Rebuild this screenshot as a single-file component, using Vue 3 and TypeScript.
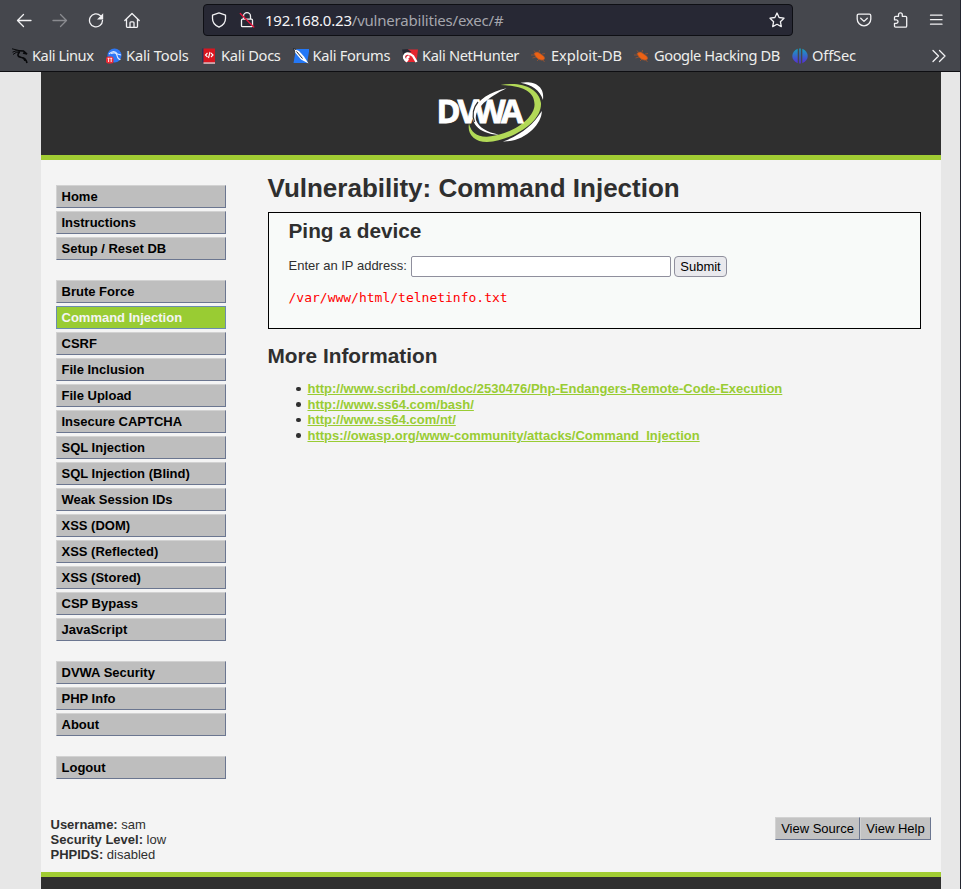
<script setup lang="ts">
interface Bookmark {
  label: string
  icon: 'dragon' | 'tools' | 'docs' | 'forums' | 'nethunter' | 'bug' | 'offsec'
  /** letter spacing in px */
  tracking: number
}

const bookmarks: Bookmark[] = [
  { label: 'Kali Linux', icon: 'dragon', tracking: -0.45 },
  { label: 'Kali Tools', icon: 'tools', tracking: -0.17 },
  { label: 'Kali Docs', icon: 'docs', tracking: -0.3 },
  { label: 'Kali Forums', icon: 'forums', tracking: -0.3 },
  { label: 'Kali NetHunter', icon: 'nethunter', tracking: -0.35 },
  { label: 'Exploit-DB', icon: 'bug', tracking: -0.05 },
  { label: 'Google Hacking DB', icon: 'bug', tracking: -0.43 },
  { label: 'OffSec', icon: 'offsec', tracking: -0.15 },
]

const menu: string[][] = [
  ['Home', 'Instructions', 'Setup / Reset DB'],
  [
    'Brute Force', 'Command Injection', 'CSRF', 'File Inclusion', 'File Upload',
    'Insecure CAPTCHA', 'SQL Injection', 'SQL Injection (Blind)', 'Weak Session IDs',
    'XSS (DOM)', 'XSS (Reflected)', 'XSS (Stored)', 'CSP Bypass', 'JavaScript',
  ],
  ['DVWA Security', 'PHP Info', 'About'],
  ['Logout'],
]
const current = 'Command Injection'

const links: string[] = [
  'http://www.scribd.com/doc/2530476/Php-Endangers-Remote-Code-Execution',
  'http://www.ss64.com/bash/',
  'http://www.ss64.com/nt/',
  'https://owasp.org/www-community/attacks/Command_Injection',
]
</script>

<template>
  <div class="window">
    <header class="chrome">
      <div class="toolbar">
        <span class="tool">
          <svg viewBox="0 0 16 16"><path d="M15 8.500H1.500M7.500 2.500l-6 6 6 6" /></svg>
        </span>
        <span class="tool dim">
          <svg viewBox="0 0 16 16"><path d="M1 8.500h13.500M8.500 2.500l6 6-6 6" /></svg>
        </span>
        <span class="tool">
          <svg viewBox="0 0 16 16"><path d="M12.500 3.700A6.500 6.500 0 1 0 14.500 8.500" /><path class="solid" d="M15.200 1.200v6.300H9z" /></svg>
        </span>
        <span class="tool">
          <svg viewBox="0 0 16 16"><path d="M.8 8.500L8 1.500l7.200 7M2.500 7.300v7.300q0 .7.700.7h9.600q.7 0 .7-.7V7.300M6 15.300v-4.500q0-1 1-1h2q1 0 1 1v4.500" /></svg>
        </span>
        <div class="address">
          <svg class="shield" viewBox="0 0 16 16"><path d="M8 .8l6.500 2.300v3.400c0 4-2.500 7-6.500 8.700-4-1.700-6.500-4.700-6.500-8.700V3.100z" /></svg>
          <svg class="lock" viewBox="0 0 16 16"><path d="M4.500 7V4.200a3.500 3.500 0 0 1 7 0V7M3.500 7.200h9q1 0 1 1v5.500q0 1-1 1h-9q-1 0-1-1V8.200q0-1 1-1z" /><path class="slash" d="M1.300 1.500l13.500 13.500" /></svg>
          <span class="url"><b>192.168.0.23</b>/vulnerabilities/exec/#</span>
          <svg class="star" viewBox="0 0 16 16"><path d="M8 1l2.100 4.500 4.900.7-3.600 3.500.9 4.900L8 12.300l-4.300 2.300.9-4.900L1 6.200l4.900-.7z" /></svg>
        </div>
        <div class="actions">
          <span class="tool">
            <svg viewBox="0 0 16 16"><path d="M2.700 2.200h10.600q1.500 0 1.500 1.500V7a6.800 6.800 0 0 1-13.600 0V3.700q0-1.500 1.500-1.500zM4.700 6.300L8 9.400l3.300-3.100" /></svg>
          </span>
          <span class="tool">
            <svg viewBox="0 0 16 16"><path d="M6.500 4.300V2.700a1.900 1.900 0 0 1 3.800 0v1.600h3.200q1.200 0 1.200 1.200v8.500q0 1.200-1.200 1.200H3.700q-1.200 0-1.200-1.200v-2.700h1.800a1.700 1.700 0 0 0 0-3.400H2.500V5.500q0-1.200 1.200-1.200z" /></svg>
          </span>
          <span class="tool">
            <svg viewBox="0 0 16 16"><path d="M2.500 3.200h11.500M2.500 7.700h11.500M2.500 12.200h11.500" /></svg>
          </span>
        </div>
      </div>
      <nav class="bookmarks">
        <span v-for="b in bookmarks" :key="b.label" class="bookmark">
          <svg viewBox="0 0 16 16">
            <g v-if="b.icon === 'dragon'" class="dragon">
              <path d="M0 .8l7 1.700M.5 4.200Q4 2 8 3M1 6.500Q4 3.500 8 4" />
              <path d="M6.500 2.800l5 .2 3.500 3-4-1M7.500 4Q3.500 8.500 9.500 9.500q4.500.5 5.500 5.500M10.500 9.800q2 .7 2.500 3" class="body" />
            </g>
            <g v-else-if="b.icon === 'tools'">
              <circle cx="8.500" cy="7.500" r="7" fill="#2d78f6" />
              <path d="M3 6q5-5 8.500 0l3.500 1M5 5.500q5-2 6 2t3.500 4" fill="none" stroke="#d8e7ff" stroke-width="1.100" />
              <rect x="0" y="8.500" width="7.500" height="7" rx="2.500" fill="#ed2b35" />
              <path d="M1.600 10.300h2M2.600 10.300V14M4.200 10.300h2M5.200 10.300V14" stroke="#fff" stroke-width=".9" />
            </g>
            <g v-else-if="b.icon === 'docs'">
              <path d="M1 .5l2 0v15L1 14z" fill="#293458" />
              <rect x="2.500" y=".5" width="11.500" height="15" fill="#d91620" />
              <path d="M2.500 14.300H14v1.500H2.500z" fill="#d5c5c9" />
              <path d="M6.500 5L4.500 7l2 2M10 5l2 2-2 2M9 4L7.500 10" fill="none" stroke="#fff" stroke-width="1.100" />
            </g>
            <g v-else-if="b.icon === 'forums'">
              <path d="M3 1h13.500L14 15H.5z" fill="#2478f6" />
              <path d="M.5.5L6 3l5 5.500 4.500 7L8 11.500 2.500 5z" fill="#fff" />
              <path d="M.3.4l3 1.200M.3.400l1.500 3.300M3.500 3.500l6 7" stroke="#252932" stroke-width="1" />
            </g>
            <g v-else-if="b.icon === 'nethunter'">
              <path d="M4 1.500h12L14.500 14H3z" fill="#e5252f" />
              <path d="M0 1.500l5.500-.5 4 3-5 1-3 3z" fill="#252932" />
              <path d="M5.500 13.500Q0 10 3 6.500 6.500 4 11 8l3.500 6M6 12.500q-2-3.500 1.500-4" fill="none" stroke="#fff" stroke-width="2.300" />
            </g>
            <g v-else-if="b.icon === 'bug'" class="bug">
              <path d="M3 5.500q3-3 6 0l4 3q1.500 3-1 3.500-4 .8-7-3z" fill="#ed6214" />
              <path d="M5 5L3 2.500M8 4.500L8.500 2M11 6l3-.5M4 7H0M5 9l-3.500 1M8 11l-2 2M12 12l1.500 2" />
            </g>
            <g v-else>
              <path d="M5.700.8v14.400C2 13.500.3 11 .3 8s2-6 5.400-7.200z" fill="url(#offsec)" />
              <path d="M7.200.5h1.600v15H7.200z" fill="url(#offsec)" />
              <path d="M10.300.8c3.400 1.200 5.400 4.200 5.400 7.200s-1.700 5.500-5.400 7.200z" fill="url(#offsec)" />
              <defs>
                <linearGradient id="offsec" gradientUnits="userSpaceOnUse" x1="8" y1="0" x2="8" y2="16">
                  <stop offset="0" stop-color="#14a5bd" /><stop offset="1" stop-color="#5a28d8" />
                </linearGradient>
              </defs>
            </g>
          </svg>
          <span :style="{ letterSpacing: b.tracking + 'px' }">{{ b.label }}</span>
        </span>
        <svg class="more" viewBox="0 0 16 16"><path d="M2 2.500l5.500 5.500L2 13.500M8.500 2.500L14 8l-5.500 5.500" /></svg>
      </nav>
    </header>

    <div class="page">
      <div class="banner">
        <svg class="logo" viewBox="0 0 110 64">
          <path d="M70.500 8.300C54 12 42 20 38 29c-5 12 3 25 25 25.700C51 52 43 48 40 40c-2-12 13-23 30.500-31.700z" fill="#fff" />
          <path d="M64.500 5C85 1 103 8 105 23c1 19-28 37-54 39C38 62 31 54 33 43.500c2 9 8 13.500 18 13.200C72 56 98 40 98.500 25 99 10 84 6 64.500 5z" fill="#b2d957" />
          <path d="M84.500 2.700C97 .5 109 5 107 20 104 10 96 5 84.500 2.700z" fill="#fff" />
          <path d="M105.800 31C106 44 89 62 67 61.500 85 55 97 45 105.800 31z" fill="#fff" />
          <text class="letters" x=".5 21.500 38.300 65" y="43">DVWA</text>
          <path d="M42 22Q34.500 31 38.500 42" fill="none" stroke="#2f2f2f" stroke-width="1.200" />
        </svg>
      </div>

      <div class="middle">
        <nav class="menu">
          <ul v-for="(group, i) in menu" :key="i">
            <li v-for="item in group" :key="item" :class="{ selected: item === current }">{{ item }}</li>
          </ul>
        </nav>
        <main>
          <h1>Vulnerability: Command Injection</h1>
          <section class="vulnerable">
            <h2>Ping a device</h2>
            <form @submit.prevent>
              <label for="ip">Enter an IP address:</label>
              <input id="ip" type="text">
              <button type="submit">Submit</button>
            </form>
            <pre>/var/www/html/telnetinfo.txt</pre>
          </section>
          <h2>More Information</h2>
          <ul class="links">
            <li v-for="l in links" :key="l"><a href="#">{{ l }}</a></li>
          </ul>
        </main>
      </div>

      <div class="system">
        <div class="info">
          <div><b>Username:</b> sam</div>
          <div><b>Security Level:</b> low</div>
          <div><b>PHPIDS:</b> disabled</div>
        </div>
        <div class="buttons">
          <button type="button">View Source</button><button type="button">View Help</button>
        </div>
      </div>
      <footer></footer>
    </div>
  </div>
</template>

<style>
body { margin: 0; overflow: hidden; }
</style>

<style scoped>
* { box-sizing: border-box; }
.window {
  width: 961px;
  height: 889px;
  overflow: hidden;
  display: flex;
  flex-direction: column;
  background: #e7e7e7;
  border-right: 1px solid #23252f;
}
.chrome {
  height: 72px;
  flex: none;
  background: #45474d;
  border-bottom: 1px solid #0e0e12;
  color: #eeeeec;
  font-family: "Noto Sans", sans-serif;
}
.chrome svg { width: 16px; height: 16px; flex: none; }
.tool path, .address path, .more path {
  fill: none;
  stroke: #f2f2f4;
  stroke-width: 1.3;
  stroke-linecap: round;
  stroke-linejoin: round;
}
.tool .solid { fill: #f2f2f4; stroke: none; }
.address .slash { stroke: #e8143c; }
.toolbar { display: flex; height: 40px; padding: 0 6px; align-items: center; }
.tool { width: 36px; display: flex; justify-content: center; }
.dim { opacity: .4; }
.address {
  width: 590px;
  height: 32px;
  margin-left: 53px;
  padding: 0 7px;
  display: flex;
  align-items: center;
  background: #272834;
  border: 1px solid #0e0f14;
  border-radius: 4px;
}
.lock { margin-left: 12px; }
.url { margin-left: 10px; flex: 1; font-size: 15px; letter-spacing: -.21px; color: #a5a6ad; white-space: nowrap; }
.url b { font-weight: 400; color: #f5f5f7; }
.actions { display: flex; margin-left: auto; }
.bookmarks {
  display: grid;
  grid-template-columns: 94px 95px 91.5px 109.5px 129px 103px 158px 1fr 16px;
  align-items: center;
  height: 31px;
  padding: 0 13px 0 12px;
  font-size: 14.67px;
  line-height: 20px;
  white-space: nowrap;
}
.bookmark { display: flex; align-items: center; gap: 4px; }
.bookmark span { padding-bottom: 1px; }
.dragon path { fill: none; stroke: #08090b; stroke-width: 1; }
.dragon .body { stroke-width: 1.6; }
.bug path { stroke: #ad5428; stroke-width: .7; }

.page {
  width: 900px;
  margin-left: 40.5px;
  flex: 1;
  display: flex;
  flex-direction: column;
  background: #f4f4f4;
  color: #2f2f2f;
  font: 13px/15px "Liberation Sans", Arial, sans-serif;
}
.banner {
  height: 88px;
  flex: none;
  display: flex;
  justify-content: center;
  padding-top: 8px;
  background: #2f2f2f;
  border-bottom: 5px solid #a1cc33;
}
.logo { width: 110px; height: 64px; }
.letters { font: 700 32.5px "Open Sans", sans-serif; fill: #fff; stroke: #fff; stroke-width: .8px; }
.middle { display: flex; height: 657px; flex: none; }
.menu { width: 185px; padding: 25px 0 0 15px; flex: none; }
.menu ul { list-style: none; margin: 0 0 20px; padding: 0; display: grid; gap: 3px; }
.menu li {
  height: 23px;
  padding: 3px 5px;
  line-height: 16px;
  font-weight: 700;
  color: #000;
  background: #bebebe;
  border: 1px solid;
  border-color: #d2d2d2 #6b7690 #6b7690 #d2d2d2;
}
.menu .selected { background: #9c3; color: #f4f4f4; border-color: #6b8caf; }
main { width: 653px; margin-left: 42px; }
h1 { margin: 13px 0 9px; font-size: 26px; line-height: 30px; }
h2 { margin: 0; font-size: 20.8px; line-height: 24px; }
.vulnerable {
  height: 117px;
  padding: 6px 20px 0;
  margin-bottom: 15px;
  background: #f8faf9;
  border: 1px solid #000;
}
form { display: flex; align-items: center; margin-top: 13px; height: 21px; }
form label { width: 122px; line-height: 19px; align-self: flex-start; white-space: nowrap; }
form input { width: 260px; height: 21px; margin: 0 3px 0 0; border: 1px solid #8f8f9d; border-radius: 2px; background: #fff; padding: 1px 4px; }
form button { width: 53px; height: 21px; padding: 0 0 0 1px; border: 1px solid #8f8f9d; border-radius: 4px; background: #e9e9ed; color: #000; font: 13px/18px "Liberation Sans", Arial, sans-serif; }
pre { margin: 13px 0 0; color: #f00; font: 13px/15px "DejaVu Sans Mono", monospace; }
.links { margin: 13px 0 0; padding-left: 28.5px; line-height: 15.6px; list-style: none; }
.links li { display: flex; align-items: center; }
.links li::before { content: ""; width: 4.6px; height: 4.6px; margin: 0 6.7px 0 .2px; border-radius: 50%; background: #2f2f2f; }
.links a { color: #9c3; font-weight: 700; }
.system { height: 55px; flex: none; display: flex; justify-content: space-between; padding: 0 10px; }
.buttons { display: flex; height: 23px; }
.buttons button {
  height: 23px;
  width: 85px;
  padding: 0 0 0 1px;
  color: #000;
  background: #c3c3c3;
  border: 1px solid;
  border-color: #d2d2d2 #6b7690 #6b7690 #d2d2d2;
  font: 13px/19px "Liberation Sans", Arial, sans-serif;
}
.buttons button:last-child { width: 71px; }
footer { flex: 1; background: #2f2f2f; border-top: 5px solid #a1cc33; }
</style>
